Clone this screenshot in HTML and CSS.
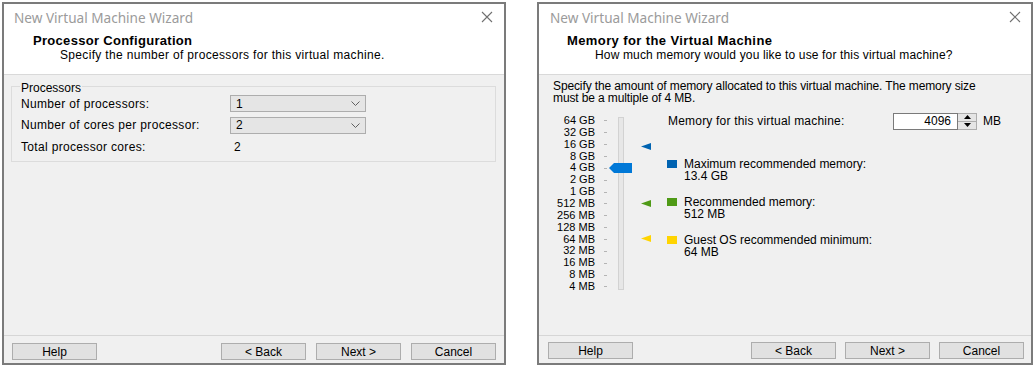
FILE: index.html
```html
<!DOCTYPE html>
<html>
<head>
<meta charset="utf-8">
<link rel="stylesheet" href="styles.css">
</head>
<body>
<div class="screen">
  <section class="win win-left">
    <div class="head">
      <div class="titlebar">
        <span class="wtitle">New Virtual Machine Wizard</span>
        <svg class="close" width="12" height="12" viewBox="0 0 12 12"><path d="M1 1 L11 11 M11 1 L1 11" stroke="#707070" stroke-width="1.1" fill="none"/></svg>
      </div>
      <div class="htitle">Processor Configuration</div>
      <div class="hsub">Specify the number of processors for this virtual machine.</div>
    </div>
    <div class="body lbody">
      <div class="group">
        <span class="group-label">Processors</span>
        <div class="grid">
          <span class="glabel">Number of processors:</span>
          <div class="combo"><span>1</span><svg width="9" height="5" viewBox="0 0 9 5"><path d="M0.5 0.5 L4.5 4.5 L8.5 0.5" stroke="#606060" fill="none"/></svg></div>
          <span class="glabel">Number of cores per processor:</span>
          <div class="combo"><span>2</span><svg width="9" height="5" viewBox="0 0 9 5"><path d="M0.5 0.5 L4.5 4.5 L8.5 0.5" stroke="#606060" fill="none"/></svg></div>
          <span class="glabel">Total processor cores:</span>
          <span class="gvalue">2</span>
        </div>
      </div>
    </div>
    <div class="footer">
      <button class="btn help">Help</button>
      <button class="btn">&lt; Back</button>
      <button class="btn">Next &gt;</button>
      <button class="btn">Cancel</button>
    </div>
  </section>

  <section class="win win-right">
    <div class="head">
      <div class="titlebar">
        <span class="wtitle">New Virtual Machine Wizard</span>
        <svg class="close" width="12" height="12" viewBox="0 0 12 12"><path d="M1 1 L11 11 M11 1 L1 11" stroke="#707070" stroke-width="1.1" fill="none"/></svg>
      </div>
      <div class="htitle">Memory for the Virtual Machine</div>
      <div class="hsub">How much memory would you like to use for this virtual machine?</div>
    </div>
    <div class="body rbody">
      <p class="intro">Specify the amount of memory allocated to this virtual machine. The memory size<br>must be a multiple of 4 MB.</p>
      <div class="mem">
        <div class="scale">
          <div class="srow"><span>64 GB</span><i class="tick"></i></div>
          <div class="srow"><span>32 GB</span><i class="tick"></i></div>
          <div class="srow"><span>16 GB</span><i class="tick"></i></div>
          <div class="srow"><span>8 GB</span><i class="tick"></i></div>
          <div class="srow"><span>4 GB</span><i class="tick"></i></div>
          <div class="srow"><span>2 GB</span><i class="tick"></i></div>
          <div class="srow"><span>1 GB</span><i class="tick"></i></div>
          <div class="srow"><span>512 MB</span><i class="tick"></i></div>
          <div class="srow"><span>256 MB</span><i class="tick"></i></div>
          <div class="srow"><span>128 MB</span><i class="tick"></i></div>
          <div class="srow"><span>64 MB</span><i class="tick"></i></div>
          <div class="srow"><span>32 MB</span><i class="tick"></i></div>
          <div class="srow"><span>16 MB</span><i class="tick"></i></div>
          <div class="srow"><span>8 MB</span><i class="tick"></i></div>
          <div class="srow"><span>4 MB</span><i class="tick"></i></div>
        </div>
        <div class="track">
          <svg class="thumb" width="23" height="10" viewBox="0 0 23 10"><polygon points="0,5 5,0 23,0 23,10 5,10" fill="#0078d7"/></svg>
        </div>
        <div class="markers">
          <svg class="marker" style="top:32px" width="10" height="7" viewBox="0 0 10 7"><polygon points="0,3.5 10,0 10,7" fill="#0063b1"/></svg>
          <svg class="marker" style="top:89px" width="10" height="7" viewBox="0 0 10 7"><polygon points="0,3.5 10,0 10,7" fill="#4f9a16"/></svg>
          <svg class="marker" style="top:124px" width="10" height="7" viewBox="0 0 10 7"><polygon points="0,3.5 10,0 10,7" fill="#ffd400"/></svg>
        </div>
        <div class="info">
          <div class="mem-row">
            <span class="mem-label">Memory for this virtual machine:</span>
            <span class="spin-input">4096</span>
            <span class="spin-btns">
              <span class="sb"><svg width="7" height="4" viewBox="0 0 7 4"><polygon points="0,4 3.5,0 7,4" fill="#000"/></svg></span>
              <span class="sb"><svg width="7" height="4" viewBox="0 0 7 4"><polygon points="0,0 3.5,4 7,0" fill="#000"/></svg></span>
            </span>
            <span class="mb">MB</span>
          </div>
          <div class="legend-item first">
            <i class="swatch blue"></i>
            <div>Maximum recommended memory:<br>13.4 GB</div>
          </div>
          <div class="legend-item">
            <i class="swatch green"></i>
            <div>Recommended memory:<br>512 MB</div>
          </div>
          <div class="legend-item">
            <i class="swatch yellow"></i>
            <div>Guest OS recommended minimum:<br>64 MB</div>
          </div>
        </div>
      </div>
    </div>
    <div class="footer">
      <button class="btn help">Help</button>
      <button class="btn">&lt; Back</button>
      <button class="btn">Next &gt;</button>
      <button class="btn">Cancel</button>
    </div>
  </section>
</div>
</body>
</html>
```

FILE: styles.css
```css
body {
  margin: 0;
  background: #fff;
  font-family: "Liberation Sans", Arial, sans-serif;
  font-size: 12px;
  color: #000;
}
.screen {
  display: flex;
  padding: 2px 0 0 2px;
  gap: 31px;
}
.win {
  box-sizing: border-box;
  height: 363px;
  border: 2px solid #7b7b7b;
  background: #f0f0f0;
  display: flex;
  flex-direction: column;
}
.win-left { width: 504px; }
.win-right { width: 496px; }

.head {
  box-sizing: border-box;
  height: 71px;
  background: #fff;
  border-bottom: 1px solid #d9d9d9;
}
.titlebar {
  height: 26px;
  display: flex;
  align-items: center;
  justify-content: space-between;
  padding: 0 11px 0 10px;
}
.win-right .titlebar { padding-left: 11px; padding-right: 10px; }
.wtitle {
  font-family: "Noto Sans", "Liberation Sans", sans-serif;
  font-size: 13.6px;
  color: #9b9b9b;
}
.htitle {
  margin-top: 4px;
  line-height: 14px;
  font-weight: bold;
  font-size: 13px;
  letter-spacing: 0.3px;
  padding-left: 29px;
}
.win-right .htitle { padding-left: 28px; letter-spacing: 0.4px; }
.hsub {
  line-height: 14px;
  padding-left: 56px;
  letter-spacing: 0.33px;
}
.win-right .hsub { letter-spacing: 0.15px; }

.body { flex: 1; }

/* left body */
.lbody { padding: 11px 8px 0 7px; }
.group {
  border: 1px solid #dcdcdc;
  padding: 0 8px 3px 9px;
}
.group-label {
  display: block;
  width: fit-content;
  margin: -6px 0 -2px -1px;
  padding: 0 1px;
  line-height: 14px;
  background: #f0f0f0;
}
.grid {
  display: grid;
  grid-template-columns: 209px 136px;
  grid-auto-rows: 21.5px;
  align-items: center;
}
.glabel { letter-spacing: 0.33px; }
.combo {
  box-sizing: border-box;
  height: 17px;
  border: 1px solid #adadad;
  background: #e5e5e5;
  display: flex;
  align-items: center;
  justify-content: space-between;
  padding: 0 5px 0 5px;
}
.gvalue { padding-left: 4px; }

/* right body */
.rbody { padding: 5px 14px 0; }
.intro {
  margin: 0;
  line-height: 12px;
  letter-spacing: -0.12px;
}
.mem {
  display: flex;
  align-items: flex-start;
  margin-top: 7px;
}
.scale {
  padding-top: 4px;
  font-size: 11px;
}
.srow {
  height: 11.86px;
  line-height: 11.86px;
  display: flex;
  justify-content: flex-end;
  align-items: center;
  width: 55px;
}
.tick {
  width: 3px;
  height: 1px;
  background: #b4b4b4;
  margin-left: 9px;
  margin-right: 1px;
}
.track {
  position: relative;
  box-sizing: border-box;
  width: 6px;
  height: 173px;
  margin: 6px 0 0 10px;
  background: #e7e7e7;
  border: 1px solid #d2d2d2;
}
.thumb {
  position: absolute;
  left: -10px;
  top: 45px;
}
.markers {
  position: relative;
  width: 10px;
  height: 180px;
  margin-left: 17px;
}
.marker { position: absolute; left: 0; }
.info { margin-left: 17px; }
.mem-row {
  display: flex;
  align-items: center;
  height: 20px;
}
.mem-label { width: 225px; letter-spacing: 0.2px; }
.spin-input {
  box-sizing: border-box;
  width: 65px;
  height: 17px;
  line-height: 15px;
  border: 1px solid #7a7a7a;
  background: #fff;
  text-align: right;
  padding-right: 6px;
}
.spin-btns {
  box-sizing: border-box;
  width: 19px;
  height: 17px;
  border: 1px solid #adadad;
  border-left: none;
  display: flex;
  flex-direction: column;
  background: #f0f0f0;
}
.sb {
  flex: 1;
  display: flex;
  align-items: center;
  justify-content: center;
  background: #e5e5e5;
}
.sb + .sb { border-top: 1px solid #adadad; }
.mb { margin-left: 6px; }
.legend-item {
  display: flex;
  align-items: flex-start;
  line-height: 12px;
  margin-top: 14px;
}
.legend-item.first { margin-top: 27px; }
.swatch {
  width: 10px;
  height: 8px;
  margin: 2px 7px 0 -1px;
}
.swatch.blue { background: #0063b1; }
.swatch.green { background: #4f9a16; }
.swatch.yellow { background: #ffd400; }

/* footer */
.footer {
  height: 28px;
  box-sizing: border-box;
  border-top: 1px solid #d6d6d6;
  padding: 7px 8px 0 8px;
  display: flex;
  gap: 10px;
}
.win-right .footer { padding: 6px 7px 0 9px; gap: 9px; }
.btn {
  box-sizing: border-box;
  width: 85px;
  height: 17px;
  padding: 0;
  border: 1px solid #adadad;
  background: #e1e1e1;
  font: inherit;
  color: #000;
}
.help { margin-right: auto; }
```
